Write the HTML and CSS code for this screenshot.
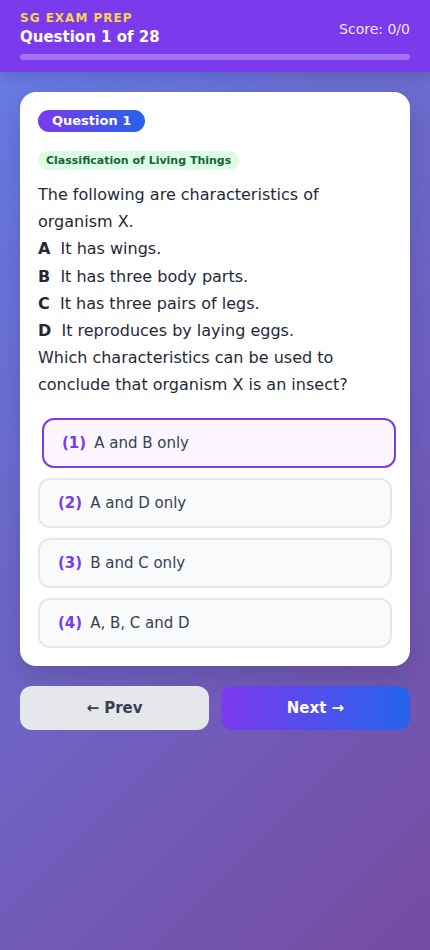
FILE: index.html
```html
<!DOCTYPE html>
<html lang="en">
  <head>
    <meta charset="utf-8">
    <meta name="viewport" content="width=device-width, initial-scale=1">
    <title>SG Exam Prep</title>
    <link rel="stylesheet" href="styles.css">
  </head>
  <body>
    <div class='header'>
        <div class='header-top'>
            <div>
                <div class='brand'>SG EXAM PREP</div>
                <div class='title'>Question 1 of 28</div>
            </div>
            <div class='score'>Score: 0/0</div>
        </div>
        <div class='progress'></div>
    </div>
    <div class='main'>
        <div class='card'>
            <div class='badge'>Question 1</div>
            <div class='topic'>Classification of Living Things</div>
            <div class='question'>
                <p>The following are characteristics of organism X.</p>
                <p><b>A</b>&nbsp; It has wings.</p>
                <p><b>B</b>&nbsp; It has three body parts.</p>
                <p><b>C</b>&nbsp; It has three pairs of legs.</p>
                <p><b>D</b>&nbsp; It reproduces by laying eggs.</p>
                <p>Which characteristics can be used to conclude that organism X is an insect?</p>
            </div>
            <div class='options'>
                <div class='option selected'><span class='num'>(1)</span>A and B only</div>
                <div class='option'><span class='num'>(2)</span>A and D only</div>
                <div class='option'><span class='num'>(3)</span>B and C only</div>
                <div class='option'><span class='num'>(4)</span>A, B, C and D</div>
            </div>
        </div>
        <div class='nav'>
            <div class='btn prev'>&larr; Prev</div>
            <div class='btn next'>Next &rarr;</div>
        </div>
    </div>
  </body>
</html>
```

FILE: styles.css
```css
* {
    box-sizing: border-box;
}
body {
    margin: 0;
    min-height: 100vh;
    font-family: "DejaVu Sans", Verdana, sans-serif;
    background: linear-gradient(135deg, #667eea 0%, #764ba2 100%);
    color: #1f2937;
}
.header {
    background-color: #7c3aed;
    padding: 10px 20px 12px;
    box-shadow: 0 4px 12px rgba(0,0,0,0.15);
}
.header-top {
    display: flex;
    justify-content: space-between;
    align-items: center;
}
.brand {
    font-size: 12px;
    line-height: 16px;
    font-weight: bold;
    letter-spacing: 1px;
    color: #fcd34d;
}
.title {
    font-size: 15px;
    line-height: 22px;
    font-weight: bold;
    color: #fff;
}
.score {
    font-size: 14px;
    color: rgba(255,255,255,0.9);
}
.progress {
    margin-top: 6px;
    height: 6px;
    border-radius: 3px;
    background-color: rgba(255,255,255,0.3);
}
.main {
    padding: 20px;
}
.card {
    background-color: #fff;
    border-radius: 16px;
    padding: 18px;
    box-shadow: 0 10px 30px rgba(0,0,0,0.15);
}
.badge {
    display: inline-block;
    padding: 4px 14px;
    font-size: 13px;
    line-height: 14px;
    font-weight: bold;
    color: #fff;
    border-radius: 11px;
    background: linear-gradient(90deg, #7c3aed, #2563eb);
}
.topic {
    display: table;
    margin-top: 19px;
    padding: 3px 8px;
    font-size: 11px;
    line-height: 13px;
    font-weight: bold;
    color: #166534;
    background-color: #dcfce7;
    border-radius: 10px;
}
.question {
    margin-top: 11px;
    font-size: 16px;
    line-height: 27.2px;
    color: #1f2937;
}
.question p {
    margin: 0;
}
.options {
    margin-top: 19px;
    display: flex;
    flex-direction: column;
    gap: 10px;
}
.option {
    display: flex;
    align-items: center;
    gap: 8px;
    padding: 14px 18px;
    font-size: 15px;
    line-height: 18px;
    color: #374151;
    background-color: #f8fafc;
    border: 2px solid #e5e7eb;
    border-radius: 12px;
}
.option.selected {
    border-color: #7c3aed;
    background-color: #faf5ff;
    transform: translateX(4px);
}
.num {
    font-weight: bold;
    color: #7c3aed;
}
.nav {
    margin-top: 20px;
    display: flex;
    gap: 12px;
}
.btn {
    flex: 1;
    padding: 12px;
    font-size: 15px;
    line-height: 20px;
    font-weight: bold;
    text-align: center;
    border-radius: 12px;
}
.prev {
    background-color: #e5e7eb;
    color: #374151;
}
.next {
    color: #fff;
    background: linear-gradient(90deg, #7c3aed, #2563eb);
}
```
